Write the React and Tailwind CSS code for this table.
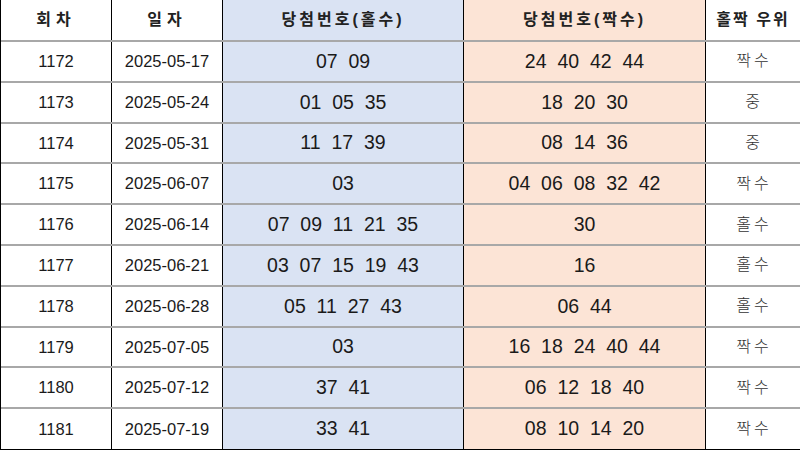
const rows = [
  ['1172', '2025-05-17', '07  09', '24  40  42  44', '짝수'],
  ['1173', '2025-05-24', '01  05  35', '18  20  30', '중'],
  ['1174', '2025-05-31', '11  17  39', '08  14  36', '중'],
  ['1175', '2025-06-07', '03', '04  06  08  32  42', '짝수'],
  ['1176', '2025-06-14', '07  09  11  21  35', '30', '홀수'],
  ['1177', '2025-06-21', '03  07  15  19  43', '16', '홀수'],
  ['1178', '2025-06-28', '05  11  27  43', '06  44', '홀수'],
  ['1179', '2025-07-05', '03', '16  18  24  40  44', '짝수'],
  ['1180', '2025-07-12', '37  41', '06  12  18  40', '짝수'],
  ['1181', '2025-07-19', '33  41', '08  10  14  20', '짝수'],
];

const cols = 'grid grid-cols-[111px_111px_241px_242px_95px]';
const font = { fontFamily: '"Liberation Sans", "Noto Sans CJK KR", sans-serif' };

export default function App() {
  return (
    <div
      className="grid h-[450px] w-[800px] grid-rows-[42px_repeat(10,1fr)] overflow-hidden border-l border-black bg-white text-[#1a1a1a]"
      style={font}
    >
      <div className={`${cols} border-b-2 border-[#a8a8a8] text-[16px] font-bold text-[#222]`}>
        <div className="flex items-center justify-center border-r border-black tracking-[5px]">회차</div>
        <div className="flex items-center justify-center border-r border-black tracking-[5px]">일자</div>
        <div className="flex items-center justify-center border-r border-black bg-[#dae3f3] tracking-[3px]">당첨번호(홀수)</div>
        <div className="flex items-center justify-center border-r border-black bg-[#fce4d6] tracking-[3px]">당첨번호(짝수)</div>
        <div className="flex items-center justify-center border-r border-[#c8c8c8] tracking-[2px]">홀짝 우위</div>
      </div>
      {rows.map((r, i) => (
        <div
          key={r[0]}
          className={`${cols} ${i < rows.length - 1 ? 'border-b-2 border-[#a8a8a8]' : 'border-b border-black'}`}
        >
          <div className="flex items-center justify-center border-r border-black text-[16.5px]">{r[0]}</div>
          <div className="flex items-center justify-center border-r border-black text-[16.5px]">{r[1]}</div>
          <div className="flex items-center justify-center whitespace-pre border-r border-black bg-[#dae3f3] text-[19.5px]">{r[2]}</div>
          <div className="flex items-center justify-center whitespace-pre border-r border-black bg-[#fce4d6] text-[19.5px]">{r[3]}</div>
          <div className="flex items-center justify-center border-r border-[#c8c8c8] pl-[2px] text-[16px] font-light tracking-[3px] text-[#333]">{r[4]}</div>
        </div>
      ))}
    </div>
  );
}
